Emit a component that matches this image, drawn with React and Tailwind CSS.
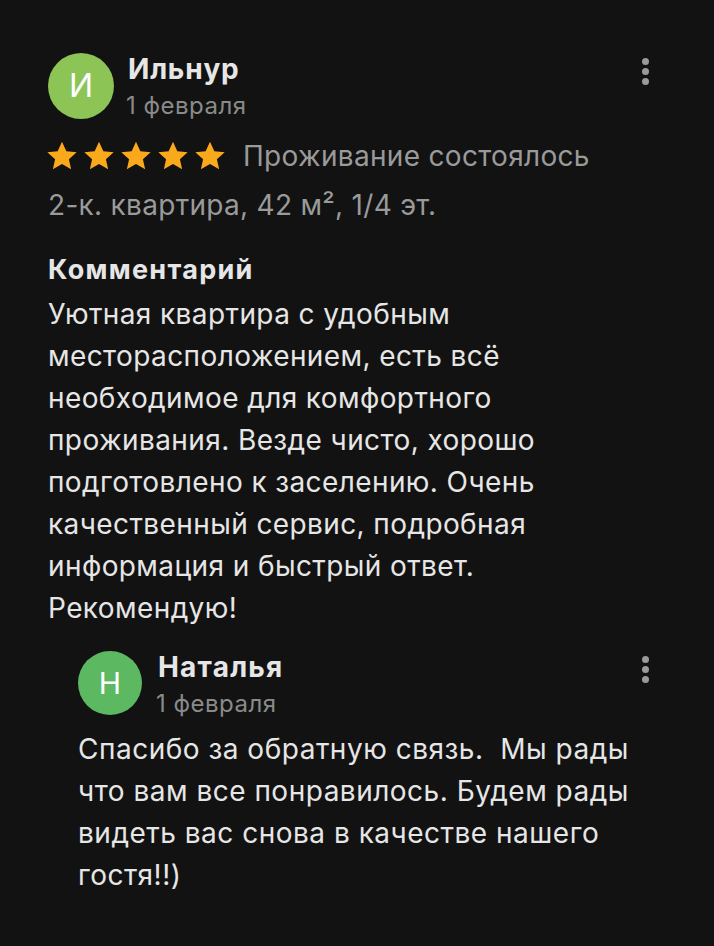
import React from 'react';

const Kebab = () => (
  <div className="flex flex-col gap-[3px] items-center pt-[5px]">
    <span className="w-[7px] h-[7px] rounded-full bg-[#9a9a9a]" />
    <span className="w-[7px] h-[7px] rounded-full bg-[#9a9a9a]" />
    <span className="w-[7px] h-[7px] rounded-full bg-[#9a9a9a]" />
  </div>
);

const Star = () => (
  <svg viewBox="0 0 24 24" className="w-[36px] h-[36px] mr-[1px]">
    <path
      fill="#f9a91b"
      d="M12 2.5l2.9 6.3 6.9.7-5.2 4.6 1.5 6.8L12 17.4l-6.1 3.5 1.5-6.8-5.2-4.6 6.9-.7z"
    />
  </svg>
);

const review = [
  'Уютная квартира с удобным',
  'месторасположением, есть всё',
  'необходимое для комфортного',
  'проживания. Везде чисто, хорошо',
  'подготовлено к заселению. Очень',
  'качественный сервис, подробная',
  'информация и быстрый ответ.',
  'Рекомендую!',
];

const answer = [
  'Спасибо за обратную связь.  Мы рады',
  'что вам все понравилось. Будем рады',
  'видеть вас снова в качестве нашего',
  'гостя!!)',
];

export default function App() {
  return (
    <div
      className="w-[714px] h-[946px] bg-[#121212] text-[#e6e6e6] overflow-hidden"
      style={{ fontFamily: 'Inter, Roboto, sans-serif' }}
    >
      <div className="pl-[48px] pr-[65px] pt-[53px]">
        {/* Header */}
        <div className="flex items-start">
          <div className="w-[66px] h-[66px] rounded-full bg-[#8cc456] flex items-center justify-center text-white text-[32px] shrink-0">
            И
          </div>
          <div className="ml-[14px] flex-1 -mt-[1px]">
            <div className="text-[28px] font-bold leading-[34px] tracking-[0.8px]">Ильнур</div>
            <div className="mt-[5px] text-[24px] text-[#8a8a8a] leading-[30px] -ml-[2px] tracking-[0.5px]">1 февраля</div>
          </div>
          <Kebab />
        </div>

        {/* Stars */}
        <div className="flex items-center mt-[17px] -ml-[4px]">
          <Star />
          <Star />
          <Star />
          <Star />
          <Star />
          <span className="ml-[14px] text-[28px] text-[#9a9a9a] tracking-[0.3px] leading-[36px]">
            Проживание состоялось
          </span>
        </div>
        <div className="mt-[13px] text-[28px] text-[#9a9a9a] tracking-[0.3px] leading-[36px]">
          2-к. квартира, 42 м², 1/4 эт.
        </div>

        {/* Comment */}
        <div className="mt-[30px] text-[27px] font-bold leading-[34px] tracking-[1.3px]">Комментарий</div>
        <div className="mt-[6px] text-[28px] leading-[42px] tracking-[0.4px] text-[#e6e6e6]">
          {review.map((l) => (
            <div key={l}>{l}</div>
          ))}
        </div>

        {/* Reply */}
        <div className="pl-[30px] mt-[22px]">
          <div className="flex items-start">
            <div className="w-[64px] h-[64px] rounded-full bg-[#5cb962] flex items-center justify-center text-white text-[30px] shrink-0">
              Н
            </div>
            <div className="ml-[16px] flex-1 -mt-[1px]">
              <div className="text-[28px] font-bold leading-[34px] tracking-[1.2px]">Наталья</div>
              <div className="mt-[5px] text-[24px] text-[#8a8a8a] leading-[30px] -ml-[2px] tracking-[0.5px]">1 февраля</div>
            </div>
            <Kebab />
          </div>
          <div className="mt-[9px] text-[28px] leading-[42px] tracking-[0.5px] whitespace-pre">
            {answer.map((l) => (
              <div key={l}>{l}</div>
            ))}
          </div>
        </div>
      </div>
    </div>
  );
}
